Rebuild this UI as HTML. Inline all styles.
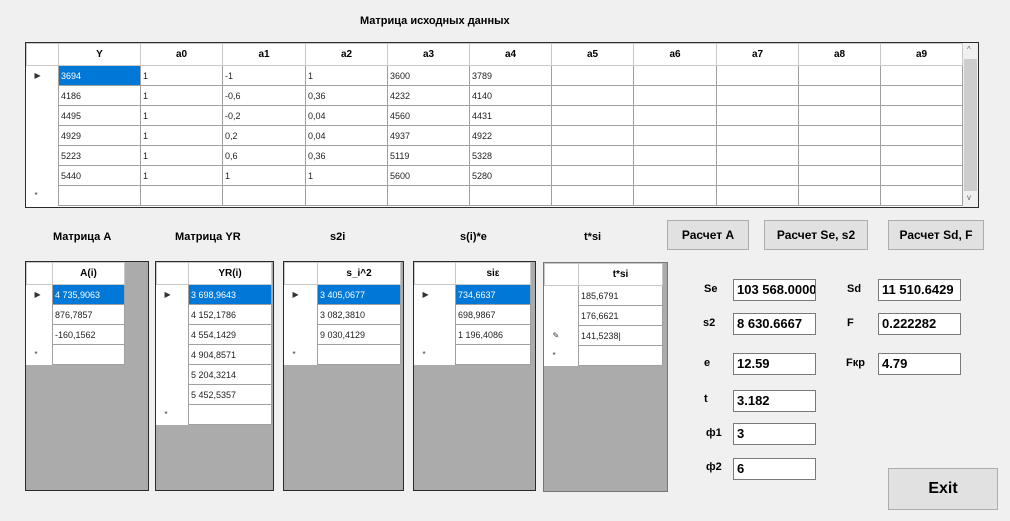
<!DOCTYPE html>
<html><head><meta charset="utf-8"><style>
body{margin:0;width:1010px;height:521px;background:#f0f0f0;font-family:"Liberation Sans",sans-serif;position:relative;overflow:hidden}
.a{position:absolute}
table{border-collapse:collapse;table-layout:fixed;background:#fff}
td{border:1px solid #a0a0a0;font-size:9px;color:#222;padding:0 2px;height:19px;white-space:nowrap;overflow:hidden}
th{border:1px solid #c8c8c8;font-size:10px;font-weight:bold;height:19px;background:#fff}
td.rh{border-right:1px solid #a0a0a0;border-left:none;border-top:none;border-bottom:none;font-size:8px;color:#333;padding-left:8px}
.sel{background:#0078d7;color:#fff}
.box{position:absolute;border:1px solid #2b2b2b;background:#ababab;overflow:hidden}
.lbl{position:absolute;font-size:11px;font-weight:bold}
.btn{position:absolute;background:#e1e1e1;border:1px solid #adadad;font-size:12px;font-weight:bold;text-align:center;box-sizing:border-box}
.tb{position:absolute;background:#fff;border:1px solid #7a7a7a;font-size:13px;font-weight:bold;padding-left:3px;box-sizing:border-box;height:22px;line-height:20px;overflow:hidden;white-space:nowrap}
</style></head><body>
<div class="lbl" style="left:360px;top:15px">Матрица исходных данных</div>
<div class="box" style="left:25px;top:42px;width:952px;height:164px;background:#fff">
<table style="width:936px">
<col style="width:32px"><col style="width:82px"><col style="width:82px"><col style="width:83px"><col style="width:82px"><col style="width:82px"><col style="width:82px"><col style="width:82px"><col style="width:83px"><col style="width:82px"><col style="width:82px"><col style="width:82px">
<tr><th></th><th>Y</th><th>a0</th><th>a1</th><th>a2</th><th>a3</th><th>a4</th><th>a5</th><th>a6</th><th>a7</th><th>a8</th><th>a9</th></tr>
<tr><td class="rh">▶</td><td class="sel">3694</td><td>1</td><td>-1</td><td>1</td><td>3600</td><td>3789</td><td></td><td></td><td></td><td></td><td></td></tr>
<tr><td class="rh"></td><td>4186</td><td>1</td><td>-0,6</td><td>0,36</td><td>4232</td><td>4140</td><td></td><td></td><td></td><td></td><td></td></tr>
<tr><td class="rh"></td><td>4495</td><td>1</td><td>-0,2</td><td>0,04</td><td>4560</td><td>4431</td><td></td><td></td><td></td><td></td><td></td></tr>
<tr><td class="rh"></td><td>4929</td><td>1</td><td>0,2</td><td>0,04</td><td>4937</td><td>4922</td><td></td><td></td><td></td><td></td><td></td></tr>
<tr><td class="rh"></td><td>5223</td><td>1</td><td>0,6</td><td>0,36</td><td>5119</td><td>5328</td><td></td><td></td><td></td><td></td><td></td></tr>
<tr><td class="rh"></td><td>5440</td><td>1</td><td>1</td><td>1</td><td>5600</td><td>5280</td><td></td><td></td><td></td><td></td><td></td></tr>
<tr><td class="rh">*</td><td></td><td></td><td></td><td></td><td></td><td></td><td></td><td></td><td></td><td></td><td></td></tr>
</table>
<div class="a" style="left:937px;top:0;width:15px;height:164px;background:#f0f0f0"><div class="a" style="left:1px;top:16px;width:13px;height:132px;background:#cdcdcd"></div><div class="a" style="left:4px;top:2px;font-size:8px;color:#666">^</div><div class="a" style="left:4px;top:150px;font-size:8px;color:#666">v</div></div>
</div>

<div class="lbl" style="left:53px;top:231px">Матрица A</div>
<div class="lbl" style="left:175px;top:231px">Матрица YR</div>
<div class="lbl" style="left:330px;top:231px">s2i</div>
<div class="lbl" style="left:460px;top:231px">s(i)*e</div>
<div class="lbl" style="left:584px;top:231px">t*si</div>

<div class="box" style="left:25px;top:261px;width:122px;height:228px">
<table><col style="width:26px"><col style="width:72px">
<tr><th></th><th>A(i)</th></tr>
<tr><td class="rh">▶</td><td class="sel">4 735,9063</td></tr>
<tr><td class="rh"></td><td>876,7857</td></tr>
<tr><td class="rh"></td><td>-160,1562</td></tr>
<tr><td class="rh">*</td><td></td></tr></table></div>

<div class="box" style="left:155px;top:261px;width:117px;height:228px">
<table><col style="width:32px"><col style="width:83px">
<tr><th></th><th>YR(i)</th></tr>
<tr><td class="rh">▶</td><td class="sel">3 698,9643</td></tr>
<tr><td class="rh"></td><td>4 152,1786</td></tr>
<tr><td class="rh"></td><td>4 554,1429</td></tr>
<tr><td class="rh"></td><td>4 904,8571</td></tr>
<tr><td class="rh"></td><td>5 204,3214</td></tr>
<tr><td class="rh"></td><td>5 452,5357</td></tr>
<tr><td class="rh">*</td><td></td></tr></table></div>

<div class="box" style="left:283px;top:261px;width:119px;height:228px">
<table><col style="width:33px"><col style="width:83px">
<tr><th></th><th>s_i^2</th></tr>
<tr><td class="rh">▶</td><td class="sel">3 405,0677</td></tr>
<tr><td class="rh"></td><td>3 082,3810</td></tr>
<tr><td class="rh"></td><td>9 030,4129</td></tr>
<tr><td class="rh">*</td><td></td></tr></table></div>

<div class="box" style="left:413px;top:261px;width:121px;height:228px">
<table><col style="width:41px"><col style="width:75px">
<tr><th></th><th>siε</th></tr>
<tr><td class="rh">▶</td><td class="sel">734,6637</td></tr>
<tr><td class="rh"></td><td>698,9867</td></tr>
<tr><td class="rh"></td><td>1 196,4086</td></tr>
<tr><td class="rh">*</td><td></td></tr></table></div>

<div class="box" style="left:543px;top:262px;width:123px;height:228px;border-color:#777">
<table><col style="width:34px"><col style="width:84px">
<tr><th></th><th>t*si</th></tr>
<tr><td class="rh"></td><td>185,6791</td></tr>
<tr><td class="rh"></td><td>176,6621</td></tr>
<tr><td class="rh">✎</td><td>141,5238|</td></tr>
<tr><td class="rh">*</td><td></td></tr></table></div>

<div class="btn" style="left:667px;top:220px;width:82px;height:30px;line-height:28px">Расчет A</div>
<div class="btn" style="left:764px;top:220px;width:104px;height:30px;line-height:28px">Расчет Se, s2</div>
<div class="btn" style="left:888px;top:220px;width:96px;height:30px;line-height:28px">Расчет Sd, F</div>

<div class="lbl" style="left:704px;top:283px">Se</div><div class="tb" style="left:733px;top:279px;width:83px">103 568.0000</div>
<div class="lbl" style="left:847px;top:283px">Sd</div><div class="tb" style="left:878px;top:279px;width:83px">11 510.6429</div>
<div class="lbl" style="left:703px;top:317px">s2</div><div class="tb" style="left:733px;top:313px;width:83px">8 630.6667</div>
<div class="lbl" style="left:847px;top:317px">F</div><div class="tb" style="left:878px;top:313px;width:83px">0.222282</div>
<div class="lbl" style="left:704px;top:357px">e</div><div class="tb" style="left:733px;top:353px;width:83px">12.59</div>
<div class="lbl" style="left:846px;top:357px">Fкр</div><div class="tb" style="left:878px;top:353px;width:83px">4.79</div>
<div class="lbl" style="left:704px;top:393px">t</div><div class="tb" style="left:733px;top:390px;width:83px">3.182</div>
<div class="lbl" style="left:706px;top:427px">ф1</div><div class="tb" style="left:733px;top:423px;width:83px">3</div>
<div class="lbl" style="left:706px;top:461px">ф2</div><div class="tb" style="left:733px;top:458px;width:83px">6</div>

<div class="btn" style="left:888px;top:468px;width:110px;height:42px;line-height:40px;font-size:16px">Exit</div>
</body></html>
